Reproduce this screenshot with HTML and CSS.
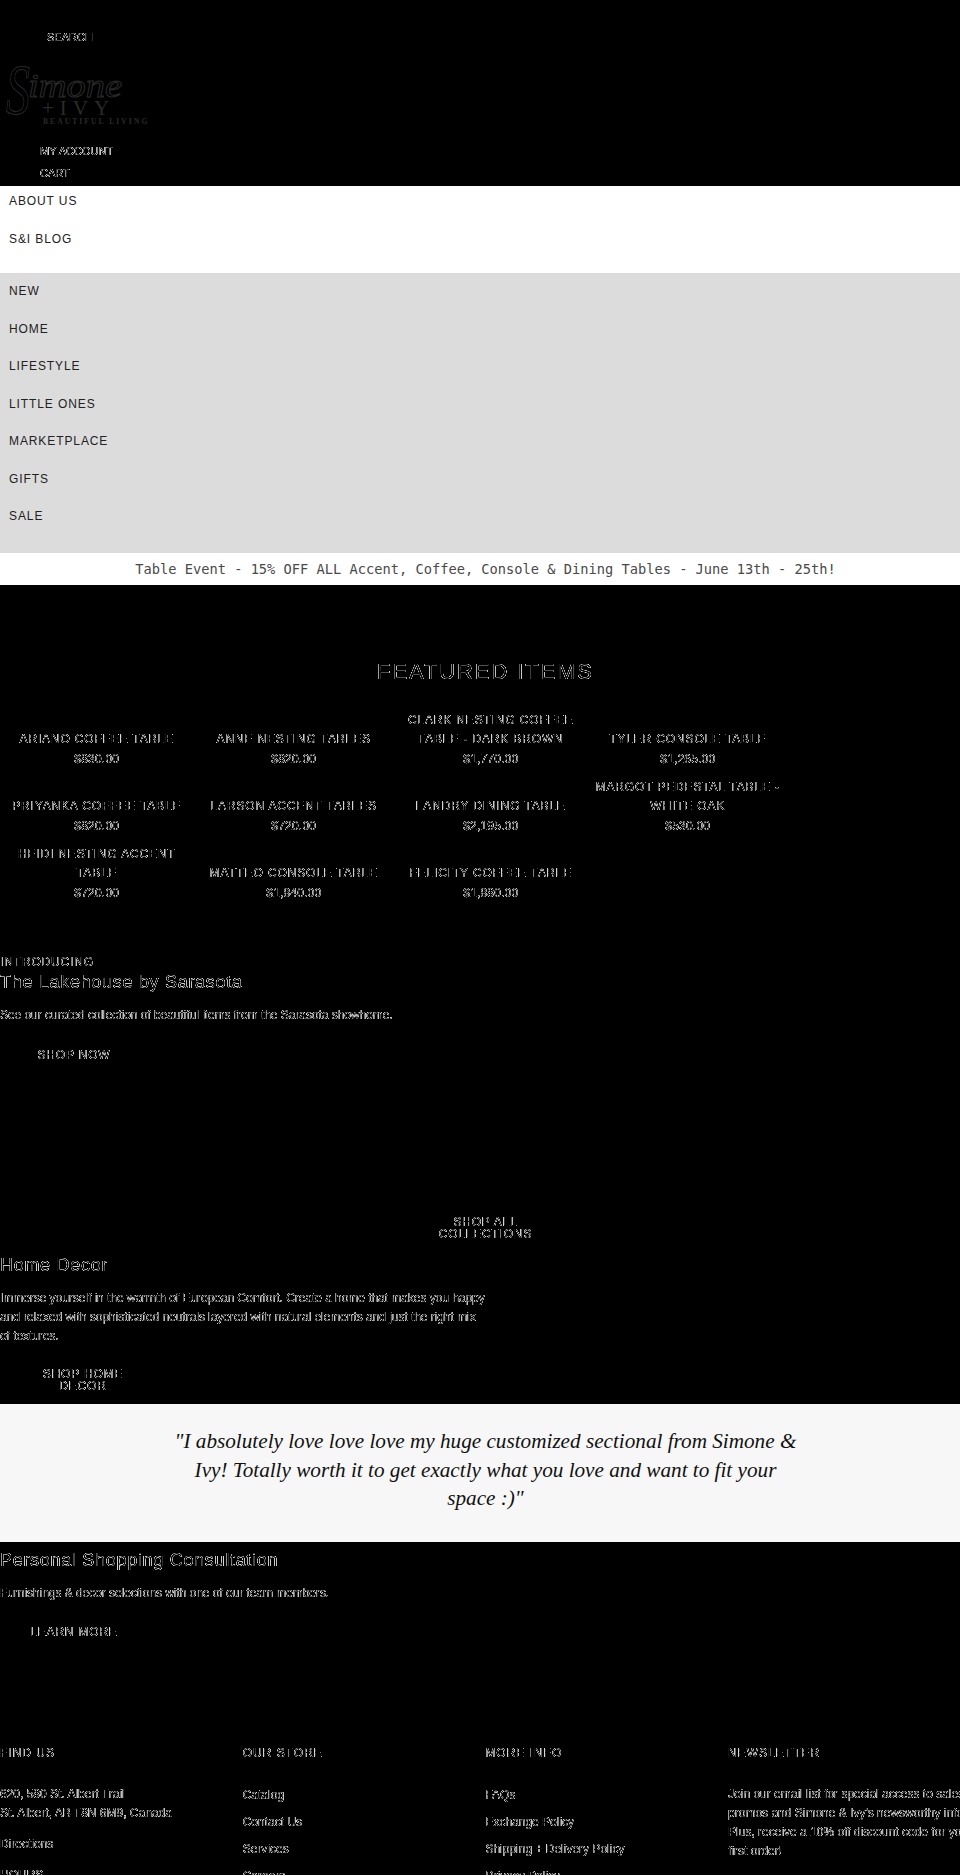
FILE: index.html
```html
<!DOCTYPE html>
<html>
<head>
  <title>Simone + Ivy</title>
  <link rel="stylesheet" href="styles.css">
</head>
<body>
  <!-- keeps only the soft edge pixels of the text on black -->
  <svg class="defs" width="0" height="0">
    <filter id="edge" x="0" y="0" width="100%" height="100%" color-interpolation-filters="sRGB">
      <feComponentTransfer>
        <feFuncA type="table" tableValues="0 0.85 0.5 0"></feFuncA>
      </feComponentTransfer>
    </filter>
  </svg>

  <header class="topBar">
    <div class="searchLink ghost">SEARCH</div>
    <svg class="logo" width="160" height="76" viewBox="0 0 160 76">
      <text class="logoScript logoCap" x="6" y="62" textLength="24" lengthAdjust="spacingAndGlyphs">S</text>
      <text class="logoScript" x="28" y="45" textLength="94" lengthAdjust="spacingAndGlyphs">imone</text>
      <text class="logoIvy" x="42" y="63">+IVY</text>
      <text class="logoTag" x="43" y="72">BEAUTIFUL LIVING</text>
    </svg>
    <div class="accountLink ghost">MY ACCOUNT</div>
    <div class="accountLink ghost">CART</div>
  </header>

  <nav class="navWhite">
    <a class="navItem">ABOUT US</a>
    <a class="navItem">S&amp;I BLOG</a>
  </nav>
  <nav class="navGrey">
    <a class="navItem">NEW</a>
    <a class="navItem">HOME</a>
    <a class="navItem">LIFESTYLE</a>
    <a class="navItem">LITTLE ONES</a>
    <a class="navItem">MARKETPLACE</a>
    <a class="navItem">GIFTS</a>
    <a class="navItem">SALE</a>
  </nav>

  <div class="announce">Table Event - 15% OFF ALL Accent, Coffee, Console &amp; Dining Tables - June 13th - 25th!</div>

  <main class="darkArea">
    <h2 class="featuredTitle ghost">FEATURED ITEMS</h2>
    <div class="productGrid ghost">
      <div class="product"><div class="productName">ARIANO COFFEE TABLE</div><div class="productPrice">$830.00</div></div>
      <div class="product"><div class="productName">ANNE NESTING TABLES</div><div class="productPrice">$820.00</div></div>
      <div class="product"><div class="productName">CLARK NESTING COFFEE TABLE - DARK BROWN</div><div class="productPrice">$1,770.00</div></div>
      <div class="product"><div class="productName">TYLER CONSOLE TABLE</div><div class="productPrice">$1,265.00</div></div>
      <div class="product"><div class="productName">PRIYANKA COFFEE TABLE</div><div class="productPrice">$820.00</div></div>
      <div class="product"><div class="productName">LARSON ACCENT TABLES</div><div class="productPrice">$720.00</div></div>
      <div class="product"><div class="productName">LANDRY DINING TABLE</div><div class="productPrice">$2,195.00</div></div>
      <div class="product"><div class="productName">MARGOT PEDESTAL TABLE - WHITE OAK</div><div class="productPrice">$530.00</div></div>
      <div class="product"><div class="productName">HEIDI NESTING ACCENT TABLE</div><div class="productPrice">$720.00</div></div>
      <div class="product"><div class="productName">MATTEO CONSOLE TABLE</div><div class="productPrice">$1,840.00</div></div>
      <div class="product"><div class="productName">FELICITY COFFEE TABLE</div><div class="productPrice">$1,880.00</div></div>
    </div>

    <section class="intro ghost">
      <div class="kicker">INTRODUCING</div>
      <h3 class="sectionTitle">The Lakehouse by Sarasota</h3>
      <p class="bodyText">See our curated collection of beautiful items from the Sarasota showhome.</p>
      <a class="shopBtn shopNow">SHOP NOW</a>
    </section>

    <a class="shopAll ghost">SHOP ALL<br>COLLECTIONS</a>

    <section class="homeDecor ghost">
      <h3 class="sectionTitle">Home Decor</h3>
      <p class="bodyText decorText">Immerse yourself in the warmth of European Comfort. Create a home that makes you happy and relaxed with sophisticated neutrals layered with natural elements and just the right mix of textures.</p>
      <a class="shopBtn shopDecor">SHOP HOME<br>DECOR</a>
    </section>
  </main>

  <blockquote class="quote">"I absolutely love love love my huge customized sectional from Simone &amp; Ivy! Totally worth it to get exactly what you love and want to fit your space :)"</blockquote>

  <section class="consult ghost">
    <h3 class="sectionTitle">Personal Shopping Consultation</h3>
    <p class="bodyText">Furnishings &amp; decor selections with one of our team members.</p>
    <a class="shopBtn learnMore">LEARN MORE</a>
  </section>

  <footer class="footer ghost">
    <div class="footCol">
      <h4 class="footTitle">FIND US</h4>
      <p class="footText">620, 580 St. Albert Trail<br>St. Albert, AB T8N 6M9, Canada</p>
      <p class="footText">Directions</p>
      <p class="footText">HOURS</p>
    </div>
    <div class="footCol">
      <h4 class="footTitle">OUR STORE</h4>
      <a class="footLink">Catalog</a>
      <a class="footLink">Contact Us</a>
      <a class="footLink">Services</a>
      <a class="footLink">Careers</a>
    </div>
    <div class="footCol">
      <h4 class="footTitle">MORE INFO</h4>
      <a class="footLink">FAQs</a>
      <a class="footLink">Exchange Policy</a>
      <a class="footLink">Shipping + Delivery Policy</a>
      <a class="footLink">Privacy Policy</a>
    </div>
    <div class="footCol">
      <h4 class="footTitle">NEWSLETTER</h4>
      <p class="footText newsText">Join our email list for special access to sales, promos and Simone &amp; Ivy's newsworthy info. Plus, receive a 10% off discount code for your first order!</p>
    </div>
  </footer>
</body>
</html>
```

FILE: styles.css
```css
html {
  height: 1875px;
  overflow: hidden;
  background-color: #000;
}

/* the page is a little wider than the window, the right edge gets cut */
body {
  margin: 0;
  width: 971px;
  height: 1875px;
  overflow: hidden;
  background-color: #000;
  font-family: "Liberation Sans", Arial, sans-serif;
}

.defs {
  display: block;
  height: 0;
}

.ghost {
  color: #fff;
  filter: url(#edge);
}

/* Header */
.topBar {
  height: 186px;
  padding-top: 29px;
  box-sizing: border-box;
  font-size: 11px;
}

.searchLink {
  margin-left: 47px;
  line-height: 16px;
}

.logo {
  display: block;
  margin-top: 7px;
  margin-bottom: 12px;
}

.logoScript {
  font-family: "Liberation Serif", serif;
  font-style: italic;
  font-size: 34px;
  fill: none;
  stroke: #2a2a2a;
  stroke-width: 1px;
}

.logoCap {
  font-size: 72px;
}

.logoIvy {
  font-family: "Liberation Serif", serif;
  font-size: 21px;
  letter-spacing: 6px;
  fill: #2a2a2a;
}

.logoTag {
  font-family: "Liberation Serif", serif;
  font-size: 7.5px;
  font-weight: bold;
  letter-spacing: 2.1px;
  fill: #2a2a2a;
}

.accountLink {
  margin-left: 40px;
  line-height: 22px;
}

/* Navigation */
.navWhite {
  background-color: #fff;
  height: 87px;
}

.navGrey {
  background-color: #dcdcdc;
  height: 280px;
}

.navItem {
  display: block;
  padding-left: 9px;
  font-size: 12px;
  line-height: 37.5px;
  letter-spacing: 0.9px;
  color: #222;
}

.navWhite .navItem {
  line-height: 31px;
  padding-bottom: 6.5px;
}

.announce {
  background-color: #fff;
  height: 32px;
  font-family: "DejaVu Sans Mono", monospace;
  font-size: 13.7px;
  line-height: 32px;
  text-align: center;
  color: #4a4a4a;
}

/* Products */
.darkArea {
  height: 819px;
  overflow: hidden;
}

.featuredTitle {
  margin: 72px 0 0;
  font-size: 22px;
  font-weight: normal;
  line-height: 30px;
  letter-spacing: 1.9px;
  text-align: center;
}

.productGrid {
  display: grid;
  grid-template-columns: repeat(4, 193.5px);
  column-gap: 3.5px;
  grid-auto-rows: 59px;
  row-gap: 8px;
  margin-top: 23px;
  align-items: end;
  text-align: center;
}

.product {
  padding: 0 2px;
}

.productName {
  font-size: 12px;
  line-height: 18.7px;
  letter-spacing: 0.85px;
}

.productPrice {
  margin-top: 2px;
  font-size: 12px;
  line-height: 18.7px;
  letter-spacing: 0.2px;
}

/* Text sections */
.intro {
  margin-top: 51px;
}

.kicker {
  font-size: 12px;
  line-height: 16px;
  letter-spacing: 0.85px;
}

.sectionTitle {
  margin: 0;
  font-size: 18px;
  font-weight: normal;
  line-height: 24px;
  letter-spacing: 0.7px;
}

.bodyText {
  margin: 12px 0 0;
  font-size: 12px;
  line-height: 19px;
  letter-spacing: -0.05px;
}

.shopBtn {
  display: block;
  font-size: 12px;
  line-height: 12px;
  letter-spacing: 0.8px;
  text-align: center;
}

.shopNow {
  width: 148px;
  margin-top: 24px;
}

.shopAll {
  display: block;
  margin-top: 155px;
  font-size: 12px;
  line-height: 12px;
  letter-spacing: 0.8px;
  text-align: center;
}

.homeDecor {
  margin-top: 13px;
}

.decorText {
  width: 486px;
}

.shopDecor {
  width: 166px;
  margin-top: 22px;
}

/* Quote */
.quote {
  margin: 0;
  height: 138px;
  padding: 23px 170px 0;
  box-sizing: border-box;
  background-color: #f7f7f7;
  font-family: "Liberation Serif", serif;
  font-style: italic;
  font-size: 21.2px;
  line-height: 28.6px;
  text-align: center;
  color: #111;
}

/* Consultation */
.consult {
  height: 192px;
  padding-top: 6px;
  box-sizing: border-box;
}

.learnMore {
  width: 148px;
  margin-top: 23px;
}

/* Footer */
.footer {
  display: grid;
  grid-template-columns: repeat(4, 242.7px);
  padding-top: 10px;
}

.footTitle {
  margin: 0 0 20px;
  font-size: 12px;
  font-weight: normal;
  line-height: 18px;
  letter-spacing: 1px;
}

.footText {
  margin: 0 0 9px;
  padding-top: 3px;
  font-size: 12px;
  line-height: 19px;
}

.newsText {
  width: 250px;
}

.footLink {
  display: block;
  font-size: 12px;
  line-height: 27px;
}
```
